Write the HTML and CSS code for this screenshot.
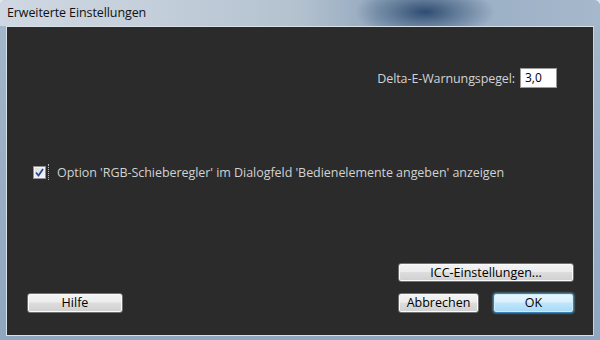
FILE: index.html
```html
<!DOCTYPE html>
<html lang="de">
<head>
<meta charset="utf-8">
<title>Erweiterte Einstellungen</title>
<link rel="stylesheet" href="styles.css">
</head>
<body>
<div class="window">
  <div class="titlebar"><span class="title">Erweiterte Einstellungen</span></div>
  <div class="frame">
    <div class="client">
      <div class="row-delta">
        <span class="label">Delta-E-Warnungspegel:</span>
        <div class="field">3,0</div>
      </div>
      <div class="row-check">
        <span class="checkbox">
          <svg width="9" height="9" viewBox="0 0 9 9"><path d="M1 4.5 L3.5 7.5 L8 1" fill="none" stroke="#2a4a9a" stroke-width="1.8"/></svg>
        </span>
        <span class="focus"></span>
        <span class="check-text">Option 'RGB-Schieberegler' im Dialogfeld 'Bedienelemente angeben' anzeigen</span>
      </div>
      <div class="row-icc">
        <button class="btn btn-icc">ICC-Einstellungen...</button>
      </div>
      <div class="row-buttons">
        <button class="btn btn-help">Hilfe</button>
        <div class="right-buttons">
          <button class="btn btn-cancel">Abbrechen</button>
          <button class="btn btn-ok">OK</button>
        </div>
      </div>
    </div>
  </div>
</div>
</body>
</html>
```
FILE: styles.css
```css
html, body {
  margin: 0;
  padding: 0;
  background: #dfe6ee;
}
body {
  width: 600px;
  height: 340px;
  overflow: hidden;
  font-family: "Open Sans", "Noto Sans", "DejaVu Sans", sans-serif;
}
.window {
  width: 600px;
  height: 340px;
  display: flex;
  flex-direction: column;
  border-radius: 6px 6px 0 0;
  background: #a5b7ca;
  overflow: hidden;
}
.titlebar {
  height: 26px;
  flex: none;
  display: flex;
  align-items: center;
  padding-left: 7px;
  padding-bottom: 2px;
  box-sizing: border-box;
  background:
    radial-gradient(ellipse 70px 26px at 425px 12px, rgba(28,60,100,0.85) 0%, rgba(50,80,115,0.55) 45%, rgba(120,145,172,0) 100%),
    linear-gradient(90deg, #cfd8e2 0%, #c4cfdb 25%, #b3c1cf 50%, #94a9bf 63%, #9cb0c6 80%, #a6b8cb 100%);
}
.title {
  font-size: 12.5px;
  color: #111;
  letter-spacing: -0.1px;
}
.frame {
  flex: 1;
  display: flex;
  padding: 0 6px 4px 6px;
  background: linear-gradient(180deg, #a3b6ca 0%, #8ea6bf 100%);
}
.client {
  flex: 1;
  display: flex;
  flex-direction: column;
  border: 1px solid #d8e0e8;
  border-right-color: #c8d2dc;
  background: #2b2b2b;
}
.row-delta {
  display: flex;
  justify-content: flex-end;
  align-items: center;
  gap: 5px;
  margin-top: 41px;
  padding-right: 36px;
  height: 20px;
}
.label {
  color: #d2d2d2;
  font-size: 12.5px;
  letter-spacing: -0.1px;
}
.field {
  width: 37px;
  height: 20px;
  box-sizing: border-box;
  background: #fff;
  border: 1px solid #9a9a9a;
  color: #000;
  font-size: 12px;
  line-height: 18px;
  padding-left: 4px;
}
.row-check {
  display: flex;
  align-items: center;
  height: 20px;
  margin-top: 74px;
  padding-left: 26px;
}
.checkbox {
  width: 13px;
  height: 13px;
  box-sizing: border-box;
  border: 1px solid #8f8f8f;
  background: linear-gradient(135deg, #dcdcdc 0%, #f6f6f6 100%);
  display: flex;
  align-items: center;
  justify-content: center;
  box-shadow: inset 0 0 0 1px #f4f4f4;
}
.focus {
  width: 0;
  height: 16px;
  border-left: 1px dotted #b0b0b0;
  margin-left: 2px;
}
.check-text {
  color: #d2d2d2;
  font-size: 12.5px;
  letter-spacing: -0.05px;
  margin-left: 8px;
}
.row-icc {
  margin-top: auto;
  display: flex;
  justify-content: flex-end;
  padding-right: 19px;
}
.row-buttons {
  display: flex;
  justify-content: space-between;
  align-items: flex-start;
  margin-top: 11px;
  margin-bottom: 22px;
  padding-left: 20px;
  padding-right: 19px;
}
.right-buttons {
  display: flex;
  gap: 14px;
}
.btn {
  font-family: "Open Sans", "Noto Sans", "DejaVu Sans", sans-serif;
  font-size: 12.5px;
  color: #000;
  height: 20px;
  padding: 0;
  box-sizing: border-box;
  border: 1px solid #707070;
  border-radius: 3px;
  background: linear-gradient(180deg, #f4f4f4 0%, #ececec 45%, #dddddd 50%, #cfcfcf 100%);
  box-shadow: inset 0 0 0 1px #fbfbfb;
  line-height: 16px;
  cursor: default;
}
.btn-icc {
  width: 176px;
  height: 19px;
}
.btn-help {
  width: 96px;
}
.btn-cancel {
  width: 81px;
}
.btn-ok {
  width: 81px;
  border-color: #3c7fb1;
  background: linear-gradient(180deg, #eaf6fd 0%, #d9f0fc 45%, #bee6fd 50%, #a7d9f5 100%);
  box-shadow: inset 0 0 0 1px #c8eefc, 0 0 2px #7fd0f5;
}
```
